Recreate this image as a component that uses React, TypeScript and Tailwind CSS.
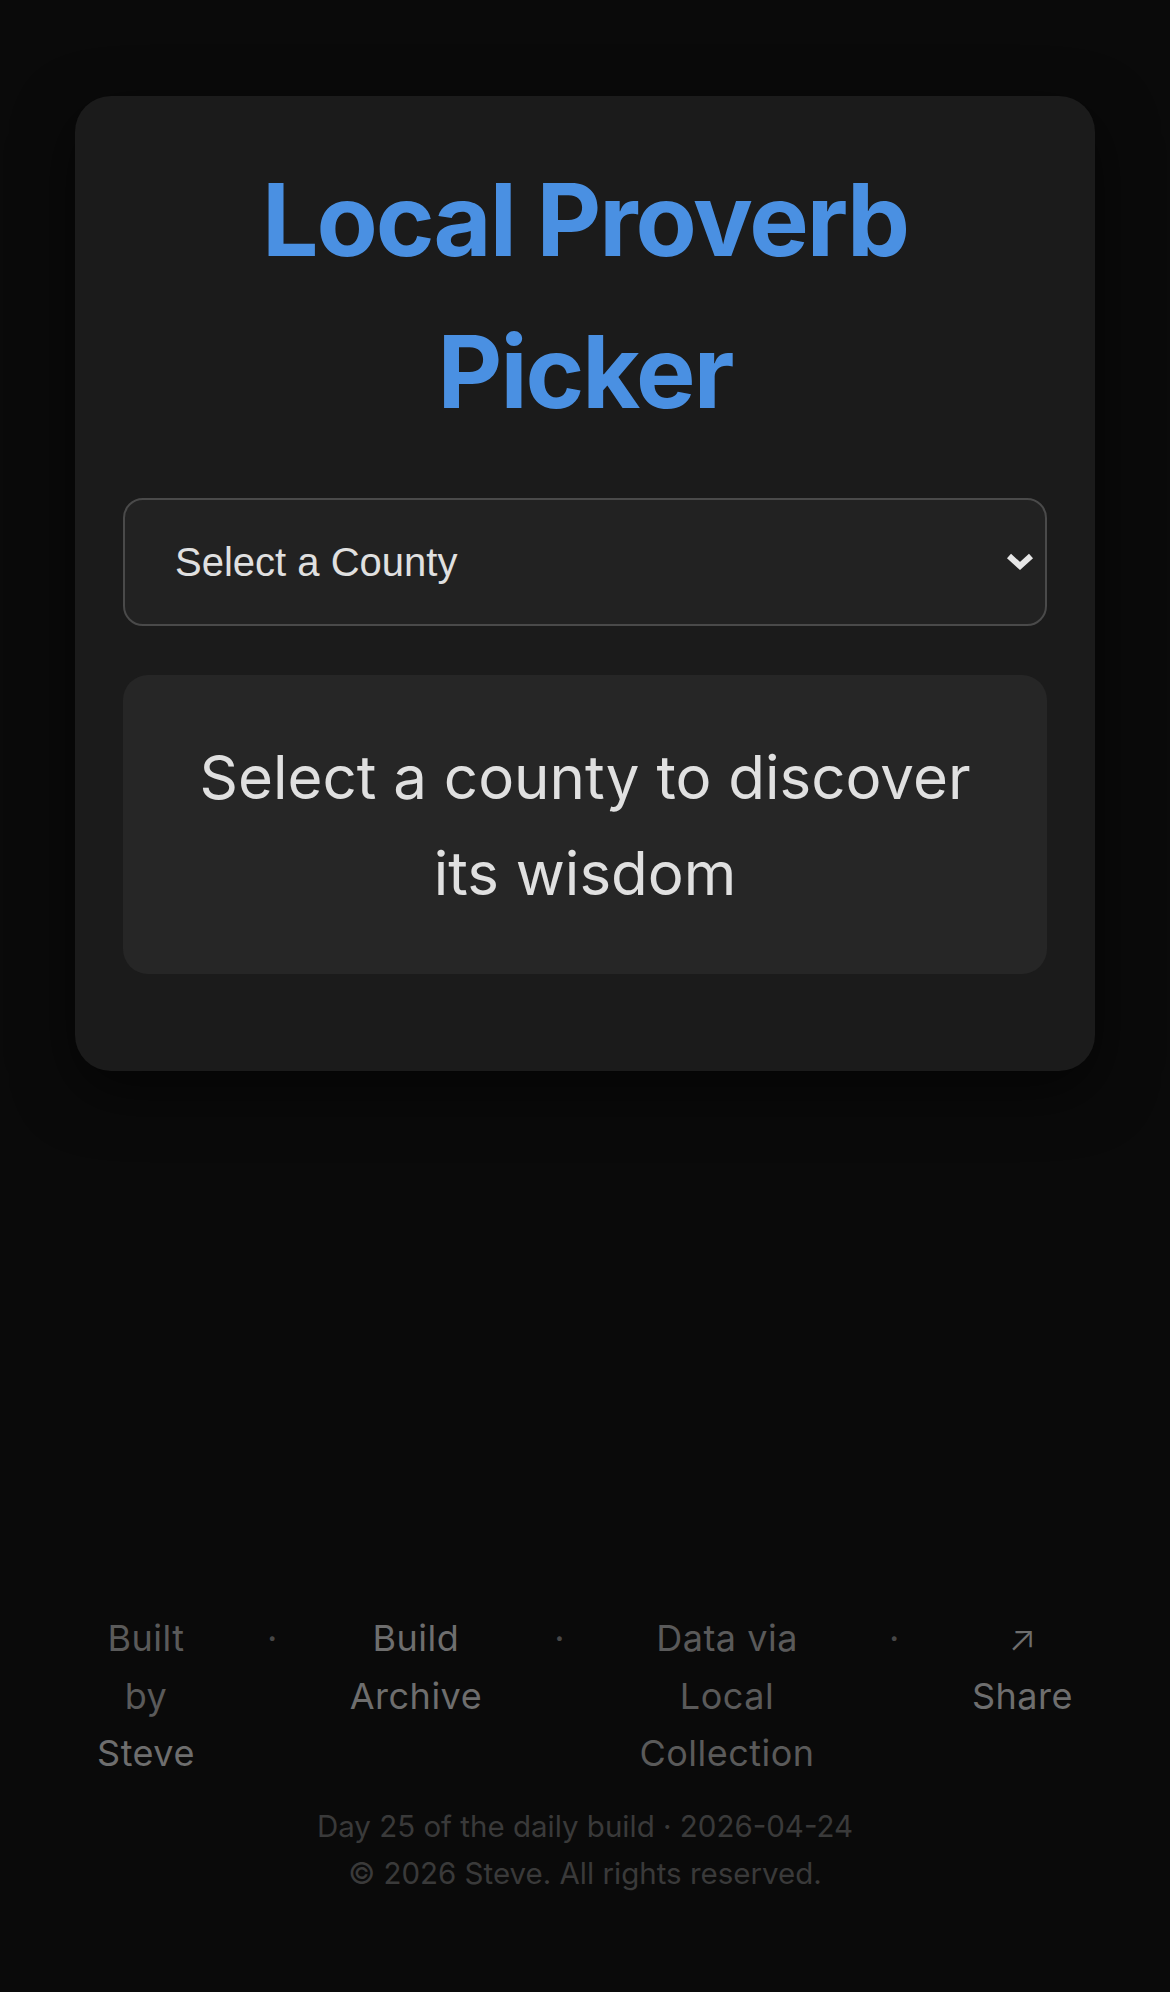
import { useState } from 'react';

const counties = ['Cork', 'Kerry', 'Galway', 'Mayo', 'Donegal', 'Clare'];

export default function App() {
  const [county, setCounty] = useState('');

  return (
    <div className="min-h-screen flex flex-col bg-[#0a0a0a] font-['Inter',sans-serif] text-[#e0e0e0]">
      <main className="px-[75px] pt-[96px]">
        <div className="rounded-[36px] bg-[#1b1b1b] px-[48px] pt-[48px] pb-[97px] shadow-[0_20px_60px_rgba(0,0,0,0.55)]">
          <h1 className="text-center text-[100px] leading-[152px] font-bold tracking-[-0.02em] text-[#4a90e2]">
            Local Proverb Picker
          </h1>

          <div className="relative mt-[50px]">
            <select
              value={county}
              onChange={(e) => setCounty(e.target.value)}
              className="block w-full appearance-none rounded-[20px] border-2 border-[#4a4a4a] bg-[#222222] pl-[50px] pr-[80px] py-[39px] font-['Liberation_Sans',Arial,sans-serif] text-[40px] leading-[46px] text-[#e0e0e0] outline-none"
            >
              <option value="">Select a County</option>
              {counties.map((c) => (
                <option key={c} value={c}>
                  {c}
                </option>
              ))}
            </select>
            <svg
              className="pointer-events-none absolute right-[13px] top-[53px]"
              width="28"
              height="22"
              viewBox="0 0 28 22"
              fill="none"
            >
              <path d="M3 5 L14 15 L25 5" stroke="#e6e6e6" strokeWidth="6" strokeLinejoin="miter" />
            </svg>
          </div>

          <div className="mt-[49px] rounded-[25px] bg-[#262626] px-[50px] pt-[54px] pb-[53px] text-center text-[60px] leading-[96px] text-[#e0e0e0]">
            {county ? `Wisdom from ${county}` : 'Select a county to discover its wisdom'}
          </div>
        </div>
      </main>

      <footer className="mt-auto pb-[95px] text-[36px] leading-[57.6px]">
        <div className="flex justify-center items-start gap-[72px] text-center tracking-[0.5px]">
          <p className="w-min text-[#5a5a5a]">
            Built by <a href="#" className="text-[#6e6e6e]">Steve</a>
          </p>
          <span className="text-[#474747]">·</span>
          <a href="#" className="w-min text-[#6e6e6e]">
            Build Archive
          </a>
          <span className="text-[#474747]">·</span>
          <p className="w-[180px] text-[#5a5a5a]">
            Data via <a href="#">Local Collection</a>
          </p>
          <span className="text-[#474747]">·</span>
          <a href="#" className="w-min text-[#6e6e6e]">
            <span className="font-light">↗</span> Share
          </a>
        </div>
        <div className="mt-[20px] text-center text-[29.5px] leading-[47px] text-[#3a3a3a]">
          <p>Day 25 of the daily build · 2026-04-24</p>
          <p>© 2026 Steve. All rights reserved.</p>
        </div>
      </footer>
    </div>
  );
}
